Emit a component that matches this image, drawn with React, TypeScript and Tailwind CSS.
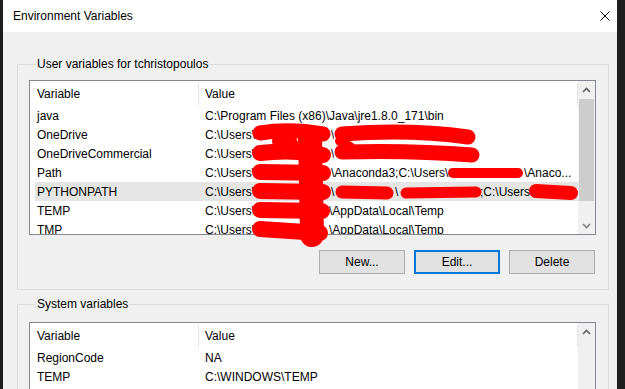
import clsx from "clsx";

type Seg = { t: string; c?: string };
type Row = { name: string; value: Seg[] };

const userRows: Row[] = [
  { name: "java", value: [{ t: "C:\\Program Files (x86)\\Java\\jre1.8.0_171\\bin" }] },
  { name: "OneDrive", value: [{ t: "C:\\Users\\t", c: "w-[126px]" }, { t: "\\" }] },
  { name: "OneDriveCommercial", value: [{ t: "C:\\Users\\t", c: "w-[126px]" }, { t: "\\" }] },
  {
    name: "Path",
    value: [
      { t: "C:\\Users\\t", c: "w-[126px]" },
      { t: "\\Anaconda3;C:\\Users\\t", c: "w-[193px]" },
      { t: "\\Anaco..." },
    ],
  },
  {
    name: "PYTHONPATH",
    value: [
      { t: "C:\\Users\\t", c: "w-[126px]" },
      { t: "\\", c: "w-[64px]" },
      { t: "\\", c: "w-[85px]" },
      { t: ";C:\\Users\\" },
    ],
  },
  { name: "TEMP", value: [{ t: "C:\\Users\\t", c: "w-[124px]" }, { t: "\\AppData\\Local\\Temp" }] },
  { name: "TMP", value: [{ t: "C:\\Users\\t", c: "w-[124px]" }, { t: "\\AppData\\Local\\Temp" }] },
];

const systemRows: Row[] = [
  { name: "RegionCode", value: [{ t: "NA" }] },
  { name: "TEMP", value: [{ t: "C:\\WINDOWS\\TEMP" }] },
  { name: "TMP", value: [{ t: "C:\\WINDOWS\\TEMP" }] },
];

const Chevron = ({ up, color }: { up?: boolean; color: string }) => (
  <svg width="9" height="6" viewBox="0 0 9 6">
    <polyline
      points={up ? "1,5 4.5,1.5 8,5" : "1,1 4.5,4.5 8,1"}
      fill="none"
      stroke={color}
      strokeWidth="1.6"
    />
  </svg>
);

// red marker scribbles hiding the user name, coords relative to list body
const Redactions = () => (
  <svg
    className="absolute left-0 top-0 pointer-events-none overflow-visible"
    width="548"
    height="160"
  >
    <g stroke="#ff0000" strokeLinecap="round" fill="none">
      <path d="M230 52 Q260 47 293 53" strokeWidth="15" />
      <path d="M230 72 Q262 68 293 74" strokeWidth="16" />
      <path d="M230 91 L293 92" strokeWidth="16" />
      <path d="M230 110 L293 111" strokeWidth="16" />
      <path d="M230 129 L292 130" strokeWidth="16" />
      <path d="M230 148 L290 152" strokeWidth="16" />
      <path d="M280 56 L282 154" strokeWidth="24" />
      <path d="M248 60 L262 62" strokeWidth="12" />
      <path d="M312 53 Q380 48 438 56" strokeWidth="15" />
      <path d="M312 71 Q380 69 442 74" strokeWidth="15" />
      <path d="M310 60 L320 66" strokeWidth="10" />
      <path d="M423 92 L488 92" strokeWidth="10" />
      <path d="M312 111 L357 112" strokeWidth="13" />
      <path d="M376 112 L446 111" strokeWidth="11" />
      <path d="M506 110 L541 112" strokeWidth="14" />
    </g>
  </svg>
);

const ListView = ({
  rows,
  selected,
  thumb,
  className,
  overlay,
}: {
  rows: Row[];
  selected?: number;
  thumb?: boolean;
  className: string;
  overlay?: React.ReactNode;
}) => (
  <div className={clsx("relative flex shrink-0 border border-[#828790] bg-white", className)}>
    <div className="relative flex-1 overflow-hidden">
      <div className="flex h-[25px] items-center">
        <div className="w-[168px] pl-[7px]">Variable</div>
        <div className="h-[22px] w-px self-start mt-[2px] bg-[#e5e5e5]" />
        <div className="flex-1 pl-[6px]">Value</div>
        <div className="h-[22px] w-px self-start mt-[2px] bg-[#e5e5e5]" />
      </div>
      {rows.map((r, i) => (
        <div
          key={r.name}
          className={clsx(
            "ml-[5px] flex h-[19px] items-center whitespace-nowrap",
            i === selected && "bg-[#e5e5e5]"
          )}
        >
          <div className="w-[164px] pl-[2px]">{r.name}</div>
          <div className="pl-[6px]">
            {r.value.map((s, j) => (
              <span key={j} className={clsx("inline-block overflow-hidden align-top", s.c)}>
                {s.t}
              </span>
            ))}
          </div>
        </div>
      ))}
    </div>
    {overlay}
    <div className="flex w-[17px] flex-col bg-[#f0f0f0]">
      <div className="flex h-[17px] shrink-0 items-center justify-center">
        <Chevron up color="#606060" />
      </div>
      <div className="flex-1">
        {thumb && <div className="mx-px mt-px h-[102px] bg-[#cdcdcd]" />}
      </div>
      {thumb && (
        <div className="flex h-[17px] shrink-0 items-center justify-center">
          <Chevron color="#808080" />
        </div>
      )}
    </div>
  </div>
);

const Button = ({ label, focused }: { label: string; focused?: boolean }) => (
  <button
    className={clsx(
      "flex h-[24px] w-[86px] items-center justify-center bg-[#e1e1e1]",
      focused ? "border-2 border-[#0078d7]" : "border border-[#adadad]"
    )}
  >
    {label}
  </button>
);

export default function App() {
  return (
    <div className="flex h-[389px] w-[625px] overflow-hidden bg-[#1e1e1e] text-[12px] leading-[16px] text-black font-['Liberation_Sans',Arial,sans-serif]">
      <div className="w-[3px] shrink-0" />
      <div className="flex w-[614px] shrink-0 flex-col bg-[#f0f0f0]">
        <div className="flex h-[32px] shrink-0 items-center justify-between bg-white pl-[10px] pr-[7px]">
          <span>Environment Variables</span>
          <svg width="10" height="10" viewBox="0 0 10 10">
            <path d="M0.5 0.5 L9.5 9.5 M9.5 0.5 L0.5 9.5" stroke="#000" strokeWidth="1" />
          </svg>
        </div>

        <fieldset className="ml-[14px] mt-[24px] w-[592px] shrink-0 border border-[#dcdcdc] pb-[15px] pl-[11px] pr-[12px] pt-[8px]">
          <legend className="ml-[7px] px-px">User variables for tchristopoulos</legend>
          <ListView
            rows={userRows}
            selected={4}
            thumb
            className="h-[155px]"
            overlay={
              <div className="pointer-events-none absolute left-0 top-0">
                <Redactions />
              </div>
            }
          />
          <div className="mt-[15px] flex justify-end gap-[9px] pr-px">
            <Button label="New..." />
            <Button label="Edit..." focused />
            <Button label="Delete" />
          </div>
        </fieldset>

        <fieldset className="ml-[14px] mt-[6px] w-[592px] shrink-0 border border-[#dcdcdc] pl-[11px] pr-[12px] pt-[10px]">
          <legend className="ml-[7px] px-px">System variables</legend>
          <ListView rows={systemRows} className="h-[100px]" />
        </fieldset>
      </div>
      <div className="flex-1" />
    </div>
  );
}
